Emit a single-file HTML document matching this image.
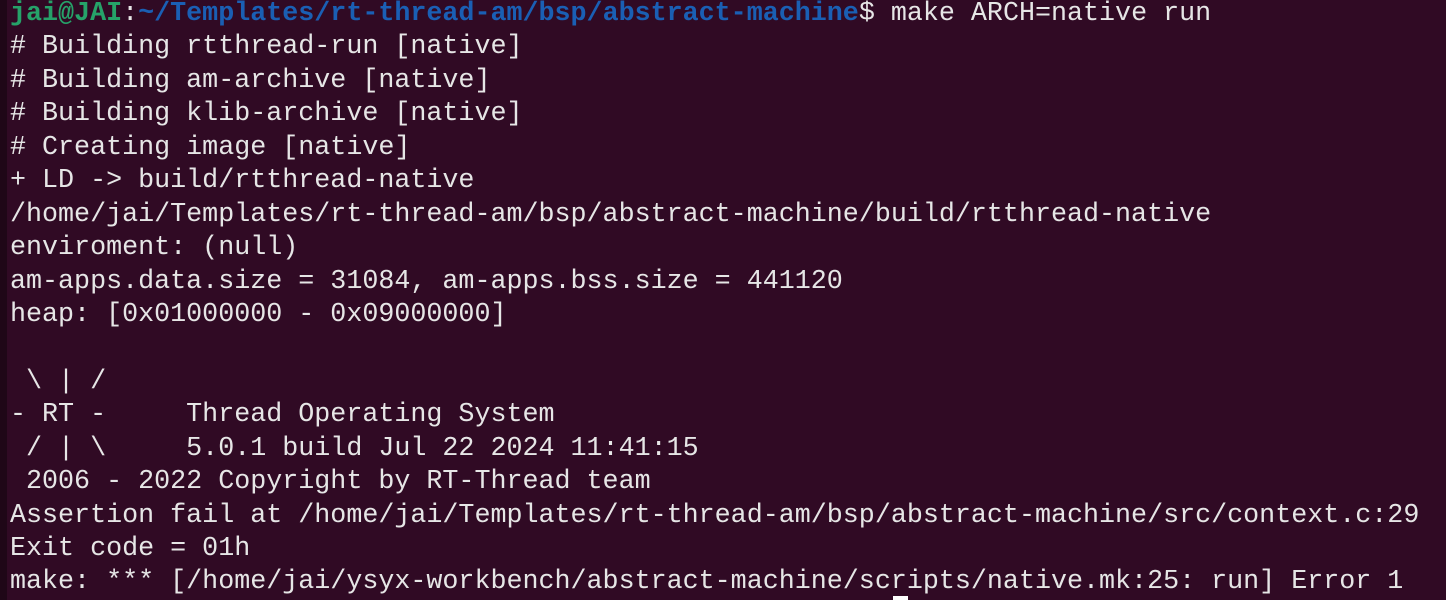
<!DOCTYPE html>
<html><head><meta charset="utf-8"><style>
html,body{margin:0;padding:0;background:#300a24;width:1446px;height:600px;overflow:hidden}
body{position:relative}
.strip{position:absolute;left:0;top:0;width:7px;height:600px;background:#1f0717}
pre{position:absolute;left:10px;top:-2px;margin:0;font-family:"Liberation Mono",monospace;font-size:26.7px;line-height:33.44px;color:#e6e6e6;white-space:pre}
.g{color:#26a269;font-weight:bold}.b{color:#1a5fb4;font-weight:bold}
.cur{position:absolute;left:893px;top:596px;width:15px;height:4px;background:#fff}
</style></head><body><div class="strip"></div><pre><span class="g">jai@JAI</span>:<span class="b">~/Templates/rt-thread-am/bsp/abstract-machine</span>$ make ARCH=native run
# Building rtthread-run [native]
# Building am-archive [native]
# Building klib-archive [native]
# Creating image [native]
+ LD -> build/rtthread-native
/home/jai/Templates/rt-thread-am/bsp/abstract-machine/build/rtthread-native
enviroment: (null)
am-apps.data.size = 31084, am-apps.bss.size = 441120
heap: [0x01000000 - 0x09000000]

 \ | /
- RT -     Thread Operating System
 / | \     5.0.1 build Jul 22 2024 11:41:15
 2006 - 2022 Copyright by RT-Thread team
Assertion fail at /home/jai/Templates/rt-thread-am/bsp/abstract-machine/src/context.c:29
Exit code = 01h
make: *** [/home/jai/ysyx-workbench/abstract-machine/scripts/native.mk:25: run] Error 1</pre><div class="cur"></div></body></html>
